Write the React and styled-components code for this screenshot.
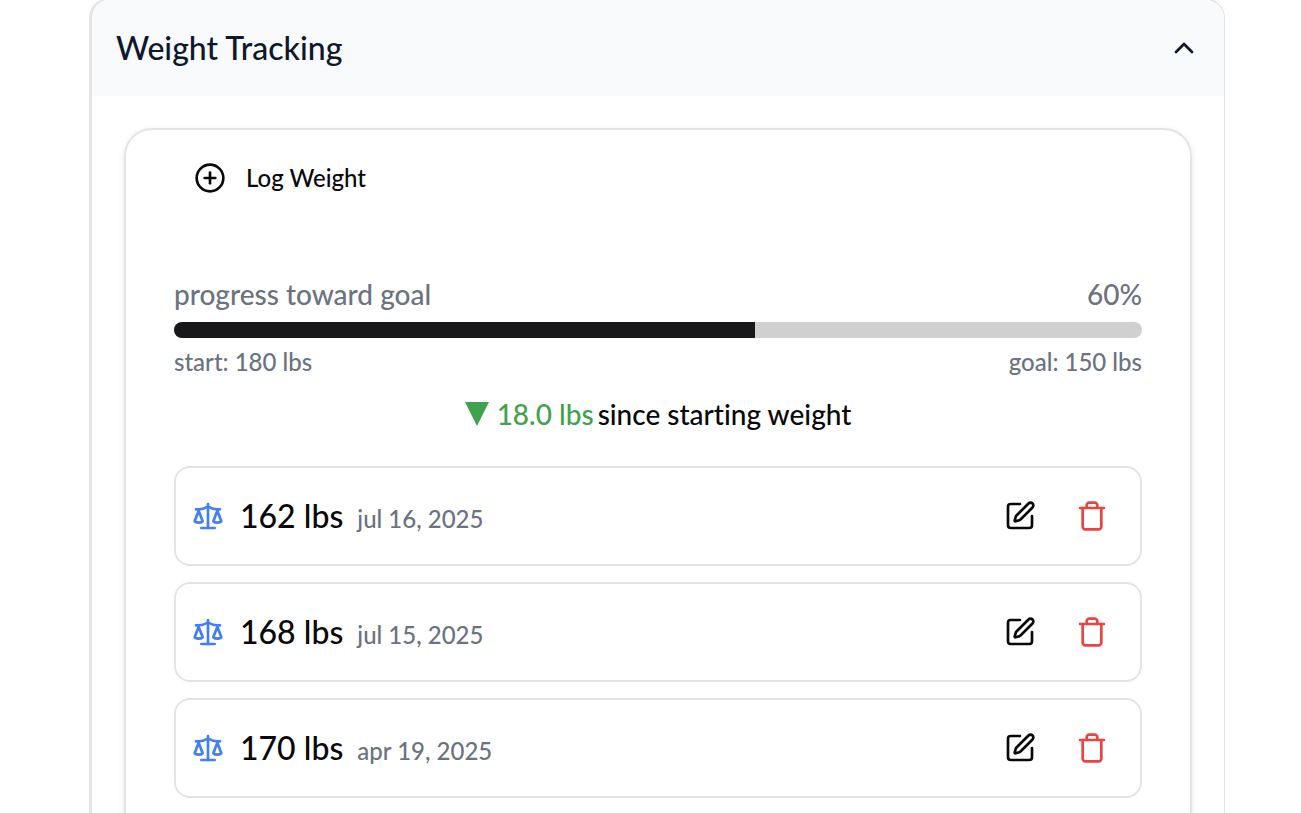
import React from "react";
import styled, { createGlobalStyle } from "styled-components";
import { ChevronUp, CirclePlus, SquarePen } from "lucide-react";

const GlobalStyle = createGlobalStyle`
  * {
    box-sizing: border-box;
  }
  body {
    margin: 0;
    background: #ffffff;
    color: #09090b;
    font-family: Lato, "Liberation Sans", sans-serif;
    font-variant-ligatures: no-common-ligatures;
  }
  h2, p, ul, button {
    margin: 0;
    padding: 0;
  }
  button {
    border: 0;
    background: none;
    color: inherit;
    font: inherit;
    font-variant-ligatures: inherit;
    cursor: pointer;
  }
`;

const Page = styled.main`
  height: 100vh;
  padding: 0 76px 0 89px;
  overflow: hidden;
`;
const Section = styled.section`
  margin-top: -2px;
  border: 2px solid #e4e4e4;
  border-right-width: 1px;
  border-left-width: 3px;
  border-radius: 20px;
  overflow: hidden;
`;
const Heading = styled.h2`
  font-weight: 500;
`;
const SectionHeader = styled.button`
  display: flex;
  align-items: center;
  justify-content: space-between;
  width: 100%;
  height: 96px;
  padding: 0 24px;
  background: #f9fafc;
  color: #0f172a;
`;
const Title = styled.span`
  font-size: 32px;
  line-height: 48px;
`;
const SectionBody = styled.div`
  padding: 32px;
`;
const Card = styled.div`
  padding: 16px 48px 48px;
  border: 2px solid #e4e4e4;
  border-radius: 28px;
  box-shadow: 0 2px 6px rgba(0, 0, 0, 0.1);
`;
const LogButton = styled.button`
  display: flex;
  align-items: center;
  gap: 20px;
  height: 64px;
  padding: 0 20px;
  font-size: 24px;
  font-weight: 500;
  line-height: 32px;
`;
const Progress = styled.div`
  margin-top: 64px;
  color: #6b7280;
`;
const ProgressText = styled.div`
  display: flex;
  justify-content: space-between;
  font-size: ${props => (props.$small ? "24px" : "28px")};
  font-weight: 500;
  line-height: ${props => (props.$small ? "32px" : "40px")};
`;
const Track = styled.div`
  height: 16px;
  margin: 8px 0;
  border-radius: 8px;
  background: #d0d0d0;
  overflow: hidden;
`;
const Fill = styled.div`
  height: 100%;
  background: #18181b;
`;
const Change = styled.p`
  display: flex;
  align-items: center;
  justify-content: center;
  gap: 4px;
  margin: 16px 0 32px;
  font-size: 28px;
  font-weight: 500;
  line-height: 40px;
`;
const Loss = styled.span`
  display: flex;
  align-items: center;
  gap: 8px;
  color: #3fa34d;
`;
const List = styled.ul`
  display: grid;
  gap: 16px;
  list-style: none;
`;
const Entry = styled.li`
  display: flex;
  align-items: center;
  justify-content: space-between;
  padding: 16px;
  border: 2px solid #e4e4e4;
  border-radius: 16px;
`;
const EntryInfo = styled.div`
  display: flex;
  align-items: center;
  gap: 16px;
  color: #437ef7;
`;
const EntryText = styled.div`
  display: flex;
  align-items: baseline;
  gap: 14px;
`;
const Weight = styled.span`
  color: #09090b;
  font-size: 32px;
  font-weight: 500;
  line-height: 48px;
`;
const EntryDate = styled.time`
  color: #6b7280;
  font-size: 24px;
  font-weight: 500;
  line-height: 32px;
`;
const Actions = styled.div`
  display: flex;
  gap: 8px;
`;
const IconButton = styled.button`
  display: grid;
  place-items: center;
  width: 64px;
  height: 64px;
  color: ${props => (props.$danger ? "#ea4340" : "#09090b")};
`;
const Icon = styled.svg.attrs({
  width: 32,
  height: 32,
  viewBox: "0 0 24 24",
  fill: "none",
  stroke: "currentColor",
  strokeWidth: 2,
  strokeLinecap: "round",
  strokeLinejoin: "round",
  "aria-hidden": true
})`
  display: block;
`;

const ScaleIcon = () => (
  <Icon>
    <path d="m16 16 3-8 3 8c-.87.65-1.92 1-3 1s-2.13-.35-3-1Z" />
    <path d="m2 16 3-8 3 8c-.87.65-1.92 1-3 1s-2.13-.35-3-1Z" />
    <path d="M7 21h10" />
    <path d="M12 3v18" />
    <path d="M3 7h2c2 0 5-1 7-2 2 1 5 2 7 2h2" />
  </Icon>
);

const TrashIcon = () => (
  <Icon>
    <path d="M3 6h18" />
    <path d="M19 6v14c0 1-1 2-2 2H7c-1 0-2-1-2-2V6" />
    <path d="M8 6V4c0-1 1-2 2-2h4c1 0 2 1 2 2v2" />
  </Icon>
);

const entries = [
  { weight: 162, date: "jul 16, 2025", iso: "2025-07-16" },
  { weight: 168, date: "jul 15, 2025", iso: "2025-07-15" },
  { weight: 170, date: "apr 19, 2025", iso: "2025-04-19" }
];

const WeightEntry = ({ weight, date, iso }) => (
  <Entry>
    <EntryInfo>
      <ScaleIcon />
      <EntryText>
        <Weight>{weight} lbs</Weight>
        <EntryDate dateTime={iso}>{date}</EntryDate>
      </EntryText>
    </EntryInfo>
    <Actions>
      <IconButton type="button" aria-label={`Edit ${date}`}>
        <SquarePen size={32} />
      </IconButton>
      <IconButton type="button" $danger aria-label={`Delete ${date}`}>
        <TrashIcon />
      </IconButton>
    </Actions>
  </Entry>
);

const App = () => {
  const progress = 60;

  return (
    <>
      <GlobalStyle />
      <Page>
        <Section>
          <Heading>
            <SectionHeader type="button" aria-expanded="true">
              <Title>Weight Tracking</Title>
              <ChevronUp size={32} />
            </SectionHeader>
          </Heading>
          <SectionBody>
            <Card>
              <LogButton type="button">
                <CirclePlus size={32} />
                Log Weight
              </LogButton>
              <Progress>
                <ProgressText>
                  <span>progress toward goal</span>
                  <span>{progress}%</span>
                </ProgressText>
                <Track
                  role="progressbar"
                  aria-label="progress toward goal"
                  aria-valuenow={progress}
                >
                  <Fill style={{ width: `${progress}%` }} />
                </Track>
                <ProgressText $small>
                  <span>start: 180 lbs</span>
                  <span>goal: 150 lbs</span>
                </ProgressText>
              </Progress>
              <Change>
                <Loss>
                  <svg width="24" height="24" viewBox="0 0 24 24" aria-hidden="true">
                    <path d="M0 0h24L12 24Z" fill="currentColor" />
                  </svg>
                  18.0 lbs
                </Loss>
                since starting weight
              </Change>
              <List>
                {entries.map(entry => (
                  <WeightEntry key={entry.iso} {...entry} />
                ))}
              </List>
            </Card>
          </SectionBody>
        </Section>
      </Page>
    </>
  );
};

export default App;
